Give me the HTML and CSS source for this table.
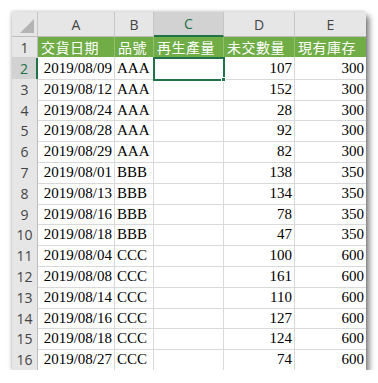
FILE: index.html
```html
<!DOCTYPE html>
<html>
<head>
<meta charset="utf-8">
<link rel="stylesheet" href="styles.css">
</head>
<body>
<div class="sheet">
  <div class="row colhead">
    <div class="corner"><span class="tri"></span></div>
    <div class="ch">A</div><div class="ch">B</div><div class="ch sel">C</div><div class="ch">D</div><div class="ch">E</div>
  </div>
  <div class="row title">
    <div class="rh">1</div>
    <div class="c">交貨日期</div><div class="c">品號</div><div class="c">再生產量</div><div class="c">未交數量</div><div class="c">現有庫存</div>
  </div>
  <div class="row"><div class="rh sel">2</div><div class="c n">2019/08/09</div><div class="c">AAA</div><div class="c active"><span class="handle"></span></div><div class="c n">107</div><div class="c n">300</div></div>
  <div class="row"><div class="rh">3</div><div class="c n">2019/08/12</div><div class="c">AAA</div><div class="c"></div><div class="c n">152</div><div class="c n">300</div></div>
  <div class="row short"><div class="rh">4</div><div class="c n">2019/08/24</div><div class="c">AAA</div><div class="c"></div><div class="c n">28</div><div class="c n">300</div></div>
  <div class="row"><div class="rh">5</div><div class="c n">2019/08/28</div><div class="c">AAA</div><div class="c"></div><div class="c n">92</div><div class="c n">300</div></div>
  <div class="row"><div class="rh">6</div><div class="c n">2019/08/29</div><div class="c">AAA</div><div class="c"></div><div class="c n">82</div><div class="c n">300</div></div>
  <div class="row"><div class="rh">7</div><div class="c n">2019/08/01</div><div class="c">BBB</div><div class="c"></div><div class="c n">138</div><div class="c n">350</div></div>
  <div class="row"><div class="rh">8</div><div class="c n">2019/08/13</div><div class="c">BBB</div><div class="c"></div><div class="c n">134</div><div class="c n">350</div></div>
  <div class="row short"><div class="rh">9</div><div class="c n">2019/08/16</div><div class="c">BBB</div><div class="c"></div><div class="c n">78</div><div class="c n">350</div></div>
  <div class="row"><div class="rh">10</div><div class="c n">2019/08/18</div><div class="c">BBB</div><div class="c"></div><div class="c n">47</div><div class="c n">350</div></div>
  <div class="row"><div class="rh">11</div><div class="c n">2019/08/04</div><div class="c">CCC</div><div class="c"></div><div class="c n">100</div><div class="c n">600</div></div>
  <div class="row"><div class="rh">12</div><div class="c n">2019/08/08</div><div class="c">CCC</div><div class="c"></div><div class="c n">161</div><div class="c n">600</div></div>
  <div class="row"><div class="rh">13</div><div class="c n">2019/08/14</div><div class="c">CCC</div><div class="c"></div><div class="c n">110</div><div class="c n">600</div></div>
  <div class="row short"><div class="rh">14</div><div class="c n">2019/08/16</div><div class="c">CCC</div><div class="c"></div><div class="c n">127</div><div class="c n">600</div></div>
  <div class="row"><div class="rh">15</div><div class="c n">2019/08/18</div><div class="c">CCC</div><div class="c"></div><div class="c n">124</div><div class="c n">600</div></div>
  <div class="row last"><div class="rh">16</div><div class="c n">2019/08/27</div><div class="c">CCC</div><div class="c"></div><div class="c n">74</div><div class="c n">600</div></div>
</div>
</body>
</html>
```
FILE: styles.css
```css
html, body {
  margin: 0;
  padding: 0;
  background: #ffffff;
}
body {
  padding: 12px 0 0 12px;
}
.sheet {
  width: 354px;
  background: #ffffff;
  box-shadow: 3px 4px 6px rgba(0,0,0,0.55), -1px -1px 3px rgba(0,0,0,0.15);
}
.row {
  display: grid;
  grid-template-columns: 26px 77px 39px 70px 71px 71px;
  height: 21px;
}
.row.short { height: 20px; }
.row.colhead { height: 25px; }
.row > div {
  box-sizing: border-box;
  border-right: 1px solid #d9d9d9;
  border-bottom: 1px solid #d9d9d9;
  position: relative;
  overflow: visible;
  white-space: nowrap;
}
.row > div:last-child { border-right: none; }
.row.last > div { border-bottom: none; }
.corner, .ch, .rh {
  background: #e6e6e6;
  font-family: "Open Sans", "Liberation Sans", sans-serif;
  color: #444;
}
.colhead > div {
  border-right: 1px solid #c6c6c6;
  border-bottom: 1px solid #bdbdbd;
}
.ch {
  font-size: 14px;
  display: flex;
  align-items: center;
  justify-content: center;
}
.ch.sel {
  background: #d2d2d2;
  color: #217346;
  border-bottom: 2px solid #217346 !important;
}
.tri {
  position: absolute;
  right: 3px;
  bottom: 3px;
  width: 0;
  height: 0;
  border-left: 14px solid transparent;
  border-bottom: 14px solid #b4b4b4;
}
.row > .rh {
  font-size: 14px;
  display: flex;
  align-items: center;
  justify-content: center;
  border-right: 1px solid #bdbdbd;
  border-bottom: 1px solid #d0d0d0;
}
.row > .rh.sel {
  background: #d2d2d2;
  color: #217346;
  border-right: 2px solid #217346;
}
.c {
  font-family: "Liberation Serif", "Noto Sans CJK TC", serif;
  font-size: 15px;
  color: #000;
  padding: 0 2px 0 2px;
  line-height: 21px;
}
.short .c { line-height: 20px; }
.c.n { text-align: right; }
.title .c {
  background: #70ad47;
  color: #ffffff;
  font-family: "Noto Sans CJK TC", sans-serif;
  font-size: 14px;
  letter-spacing: 0.5px;
  line-height: 20px;
  padding-left: 3px;
  border-right: 1px solid #8fbf6f;
  border-bottom: 1px solid #ffffff;
}
.title .c:last-child { border-right: none; }
.c.active {
  outline: 2px solid #217346;
  outline-offset: -1px;
  z-index: 2;
}
.handle {
  position: absolute;
  right: -3px;
  bottom: -3px;
  width: 5px;
  height: 5px;
  background: #217346;
  border: 1px solid #fff;
  box-sizing: border-box;
}
```
